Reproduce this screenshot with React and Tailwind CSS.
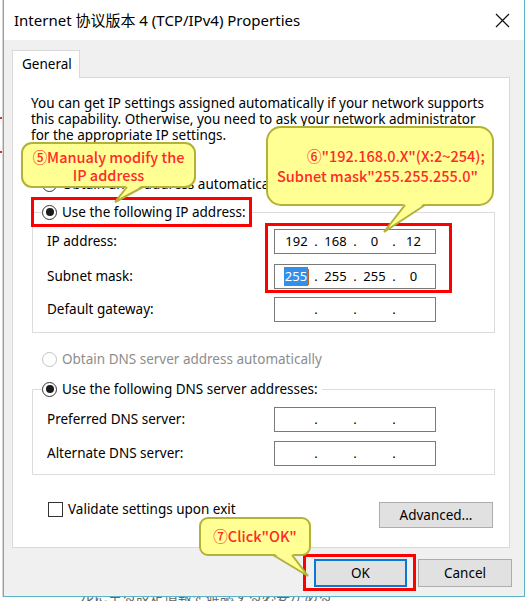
import React from "react";

const ui = "font-['Noto_Sans','Noto_Sans_CJK_SC',sans-serif]";
const note = "font-['Noto_Sans_CJK_JP','Noto_Sans',sans-serif]";

function Radio({ checked, disabled }) {
  return (
    <span
      className={
        "flex h-[15px] w-[15px] shrink-0 items-center justify-center rounded-full border bg-white " +
        (disabled ? "border-[#c4c4c4]" : "border-[#333333]")
      }
    >
      {checked && <span className="h-[8px] w-[8px] rounded-full bg-[#1a1a1a]" />}
    </span>
  );
}

function IpBox({ parts = ["", "", "", ""], selectFirst }) {
  return (
    <div className="flex h-[25px] w-[162px] items-center border border-[#7a7a7a] bg-white pl-[3px] text-[13px] text-black">
      {parts.map((p, i) => (
        <React.Fragment key={i}>
          <span className="flex w-[37px] justify-center">
            {selectFirst && i === 0 ? (
              <span className="flex items-center">
                <span className="bg-[#3390e8] px-[1px] text-white">{p}</span>
                <span className="h-[16px] w-[1px] bg-[#c8641e]" />
              </span>
            ) : (
              p
            )}
          </span>
          {i < 3 && <span className="flex w-[2px] justify-center">.</span>}
        </React.Fragment>
      ))}
    </div>
  );
}

function Row({ label, parts, selectFirst, className = "" }) {
  return (
    <div className={"flex items-center " + className}>
      <span className="w-[227px] text-[13.5px] text-black">{label}</span>
      <IpBox parts={parts} selectFirst={selectFirst} />
    </div>
  );
}

function Group({ legend, children, className = "" }) {
  return (
    <div className={"w-[463px] border border-[#dcdcdc] pl-[14px] " + className}>
      <div className="-mt-[10px] -ml-[5px] flex h-[18px] w-fit items-center gap-[5px] bg-white pr-[4px] text-[13.5px] text-black">
        <Radio checked />
        <span>{legend}</span>
      </div>
      {children}
    </div>
  );
}

function Button({ children, focused, className = "" }) {
  return (
    <div
      className={
        "flex items-center justify-center bg-[#e1e1e1] text-[13.5px] text-black " +
        (focused ? "border-2 border-[#0a78d7] " : "border border-[#adadad] ") +
        className
      }
    >
      {children}
    </div>
  );
}

function Callouts() {
  const fill = "#ffff94";
  const edge = "#b2b236";
  return (
    <svg className="pointer-events-none absolute left-0 top-0" width="529" height="601" viewBox="0 0 529 601">
      <rect x="22" y="143" width="173" height="44" rx="10" fill={fill} stroke={edge} strokeWidth="2" />
      <polygon points="127,185 115,202 143,185" fill={fill} />
      <polyline points="127,187 115,202 143,187" fill="none" stroke={edge} strokeWidth="2" />

      <rect x="267" y="127" width="226" height="78" rx="14" fill={fill} stroke={edge} strokeWidth="2" />
      <polygon points="405,203 384,232 425,203" fill={fill} />
      <polyline points="405,205 384,232 425,205" fill="none" stroke={edge} strokeWidth="2" />

      <rect x="200" y="518" width="110" height="37" rx="8" fill={fill} stroke={edge} strokeWidth="2" />
      <polygon points="273,553 308,576 292,553" fill={fill} />
      <polyline points="273,555 308,576 292,555" fill="none" stroke={edge} strokeWidth="2" />
    </svg>
  );
}

export default function App() {
  return (
    <div className={"relative h-[601px] w-[529px] overflow-hidden bg-white " + ui}>
      <div className="flex">
        {/* sliver of the window behind */}
        <div className="flex h-[597px] w-[3px] flex-col border-r border-[#d6d6d6]">
          <div className="mt-[117px] h-[2px] w-[2px] bg-[#e03030]" />
          <div className="mt-[32px] h-[2px] w-[2px] bg-[#e03030]" />
        </div>

        <div className="flex h-[597px] w-[522px] flex-col border-x border-b border-[#5ab4c6] bg-[#f0f0f0]">
          <div className="flex h-[40px] shrink-0 items-center justify-between bg-white pl-[10px] pr-[14px]">
            <span className="text-[15px] text-black">Internet 协议版本 4 (TCP/IPv4) Properties</span>
            <svg width="15" height="15" viewBox="0 0 15 15">
              <path d="M1 1 L14 14 M14 1 L1 14" stroke="#111" strokeWidth="1.2" fill="none" />
            </svg>
          </div>

          <div className="pl-[8px] pt-[10px]">
            <div className="relative z-10 -mb-px flex h-[28px] w-[68px] items-center border-x border-t border-[#d9d9d9] bg-white pl-[9px] text-[13.5px] text-black">
              General
            </div>
            <div className="h-[471px] w-[498px] border border-[#d9d9d9] bg-white pl-[18px] pt-[17px]">
              <p className="text-[13.5px] leading-[16px] text-black">
                You can get IP settings assigned automatically if your network supports
                <br />
                this capability. Otherwise, you need to ask your network administrator
                <br />
                for the appropriate IP settings.
              </p>

              <div className="ml-[11px] mt-[32px] flex h-[18px] items-center gap-[5px] text-[13.5px] text-black">
                <Radio />
                <span>Obtain an IP address automatically</span>
              </div>

              <Group legend="Use the following IP address:" className="ml-[1px] mt-[19px] pb-[10px]">
                <Row className="mt-[8px]" label="IP address:" parts={["192", "168", "0", "12"]} />
                <Row className="mt-[10px]" label="Subnet mask:" parts={["255", "255", "255", "0"]} selectFirst />
                <Row className="mt-[8px]" label="Default gateway:" />
              </Group>

              <div className="ml-[11px] mt-[17px] flex h-[18px] items-center gap-[5px] text-[13.5px] text-[#8d8d8d]">
                <Radio disabled />
                <span>Obtain DNS server address automatically</span>
              </div>

              <Group legend="Use the following DNS server addresses:" className="ml-[1px] mt-[21px] pb-[8px]">
                <Row className="mt-[9px]" label="Preferred DNS server:" />
                <Row className="mt-[9px]" label="Alternate DNS server:" />
              </Group>

              <div className="ml-[1px] mt-[27px] flex w-[463px] items-start justify-between pl-[16px] pr-[2px]">
                <div className="flex h-[15px] items-center gap-[5px] text-[13.5px] text-black">
                  <span className="h-[15px] w-[15px] border border-[#333333] bg-white" />
                  <span>Validate settings upon exit</span>
                </div>
                <Button className="h-[26px] w-[114px]">Advanced...</Button>
              </div>
            </div>
          </div>

          <div className="mt-[11px] flex justify-end gap-[11px] pr-[12px]">
            <Button focused className="h-[28px] w-[93px]">OK</Button>
            <Button className="h-[28px] w-[94px]">Cancel</Button>
          </div>
        </div>
      </div>

      {/* text of the page behind, cut off by the window */}
      <div className="h-[4px] overflow-hidden pl-[80px] text-[14px] leading-[14px] text-[#666666]">
        <span className="relative top-[-8px]">ルに至る設定情報を確認する必要がある</span>
      </div>

      <div className="absolute left-[31px] top-[197px] h-[30px] w-[221px] border-[3px] border-[#ff0000]" />
      <div className="absolute left-[265px] top-[223px] h-[70px] w-[187px] border-[3px] border-[#ff0000]" />
      <div className="absolute left-[303px] top-[554px] h-[37px] w-[113px] border-[3px] border-[#ff0000]" />

      <Callouts />

      <div className={"absolute left-[22px] top-[148px] w-[173px] text-center text-[14.5px] font-medium leading-[18px] text-[#ff2a2a] " + note}>
        ⑤Manualy modify the
        <br />
        IP address
      </div>
      <div className={"absolute left-[267px] top-[146px] w-[226px] text-[14.5px] font-medium leading-[20px] text-[#ff2a2a] " + note}>
        <div className="pl-[40px]">⑥"192.168.0.X"(X:2~254);</div>
        <div className="pl-[10px]">Subnet mask"255.255.255.0"</div>
      </div>
      <div className={"absolute left-[200px] top-[527px] w-[110px] text-center text-[14.5px] font-medium leading-[18px] text-[#ff2a2a] " + note}>
        ⑦Click"OK"
      </div>
    </div>
  );
}
